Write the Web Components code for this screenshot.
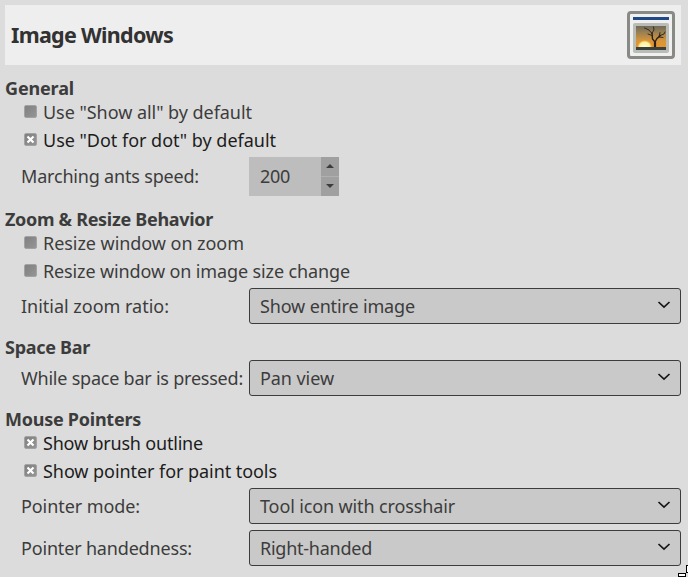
<!DOCTYPE html>
<html lang="en"><head><meta charset="utf-8"><title>Image Windows</title>
<style>
html,body{margin:0;height:100%;overflow:hidden;background:#dcdcdc}
body{font:18px/20px "Noto Sans",sans-serif;color:#3c3c3c}
</style></head><body>
<prefs-page></prefs-page>
<script>
const define=(name,html,setup)=>customElements.define(name,class extends HTMLElement{
  connectedCallback(){
    if(this.shadowRoot)return;
    this.attachShadow({mode:'open'}).innerHTML=html;
    if(setup)setup(this,this.shadowRoot);
  }
});

// Text whose tracking is adjusted so that it spans the width given in "w".
define('fit-text',`<style>:host{display:inline-block;white-space:pre}span{display:inline-block}</style><span></span>`,(el,root)=>{
  const s=root.querySelector('span');
  s.textContent=el.getAttribute('text');
  const w=+el.getAttribute('w')-1;
  if(w>0)s.style.letterSpacing=((w-s.getBoundingClientRect().width)/s.textContent.length)+'px';
});

define('image-icon',`<style>:host{display:block;width:48px;height:48px}svg{display:block}</style>
<svg width="48" height="48" viewBox="0 0 48 48">
<defs><linearGradient id="g" x1="0" y1="0" x2="0" y2="1"><stop offset="0" stop-color="#6f6a5c"/><stop offset=".35" stop-color="#a18350"/><stop offset=".7" stop-color="#d8953a"/><stop offset="1" stop-color="#e8962a"/></linearGradient>
<radialGradient id="s"><stop offset="0" stop-color="#fffbd0"/><stop offset=".7" stop-color="#fff0a0"/><stop offset="1" stop-color="#ffcf60" stop-opacity="0"/></radialGradient>
<clipPath id="c"><rect x="9" y="15" width="30" height="21"/></clipPath></defs>
<rect x="1.500" y="1.500" width="45" height="45" rx="2.500" fill="#f0f0f0" stroke="#888a85" stroke-width="3"/>
<rect x="6" y="6" width="36" height="3" fill="#204a87"/>
<rect x="6" y="12" width="36" height="30" rx="2" fill="#babdb6"/>
<rect x="9" y="15" width="30" height="24" fill="#3a4040"/>
<rect x="9" y="15" width="30" height="21" fill="url(#g)"/>
<ellipse cx="17.700" cy="36" rx="7.500" ry="7" fill="url(#s)" clip-path="url(#c)"/>
<g clip-path="url(#c)" fill="none" stroke="#2a211b" stroke-linecap="round"><path d="M28 37v-6" stroke-width="2.200"/><path d="M28 31l-2.500-3-.5-6" stroke-width="1.400"/><path d="M25 22.500l-3-3.500-4.500-2M25 22l2-3-.5-3M25 24.500l-4-1.500" stroke-width=".9"/><path d="M28 31l2-3.500 3.500-3" stroke-width="1.400"/><path d="M32 25.500l1-4M33 24.500l4-1.500 1-2M32 26l4 .5" stroke-width=".9"/></g>
</svg>`);

define('page-header',`<style>:host{display:flex;align-items:center;justify-content:space-between;box-sizing:border-box;height:60px;padding:0 6px;background:#eee;font-size:21.500px;font-weight:700;color:#323232}</style><slot></slot><image-icon></image-icon>`);

define('pref-section',`<style>:host{display:block;margin-top:13px}h2{margin:0 0 3px;height:20px;font:inherit;font-weight:700;line-height:20px}h2.tight{margin:0}</style><h2><slot name="title"></slot></h2><slot></slot>`,(el,root)=>{
  if(el.hasAttribute('tight'))root.querySelector('h2').className='tight';
});

define('check-row',`<style>:host{display:flex;align-items:center;height:28px;padding-left:19px;gap:6px}:host([checked]){color:#1c1c1c}
.b{box-sizing:border-box;width:13px;height:13px;margin-top:-1px;border:1px solid #a2a2a2;border-radius:2px;background:linear-gradient(135deg,#808080,#959595)}
svg{display:none}:host([checked]) svg{display:block}</style>
<div class="b"><svg width="11" height="11"><path d="M2.500 2.500l6 6M8.500 2.500l-6 6" stroke="#fff" stroke-width="2.200"/></svg></div><slot></slot>`);

define('field-row',`<style>:host{display:grid;grid-template-columns:228px 1fr;align-items:center;padding-left:16px}:host([after-checks]){margin-top:3px}:host([next]){margin-top:6px}:host([tall]) slot[name]{display:block;padding-bottom:1px}</style><slot name="label"></slot><slot></slot>`);

define('combo-box',`<style>:host{display:flex;align-items:center;justify-content:space-between;box-sizing:border-box;height:36px;border:1px solid #3c3c3c;border-radius:3px;background:#c9c9c9;padding:0 9px 0 10px}svg{display:block;margin-top:-3px}</style><slot></slot>
<svg width="14" height="8"><path d="M1.500 1l5.500 5.200L12.500 1" fill="none" stroke="#161616" stroke-width="1.700"/></svg>`);

define('spin-box',`<style>:host{display:grid;grid-template-columns:1fr 18px;width:90px;height:39px;background:#bdbdbd}.v{display:flex;align-items:center;padding:0 0 1px 11px}.s{display:grid;grid-template-rows:19px 19px;gap:1px;background:#b0b0b0}.s div{background:#a0a0a0;display:grid;place-items:center;padding-bottom:1px}svg{display:block}</style>
<div class="v"><slot></slot></div><div class="s"><div><svg width="8" height="4"><path d="M0 4l4-4 4 4z" fill="#3c3c3c"/></svg></div><div><svg width="8" height="4"><path d="M0 0h8L4 4z" fill="#3c3c3c"/></svg></div></div>`);

// Corner of the mouse pointer that rests at the window's lower right edge.
define('pointer-mark',`<style>:host{position:absolute;left:678px;top:564px;width:10px;height:13px}svg{display:block}</style>
<svg width="10" height="13" shape-rendering="crispEdges"><rect x="0" y="9" width="8" height="4" fill="#000"/><rect x="1" y="10" width="6" height="2" fill="#fff"/><rect x="8" y="1" width="2" height="8" fill="#000"/><rect x="9" y="2" width="1" height="6" fill="#fff"/></svg>`);

define('prefs-page',`<style>:host{display:block;padding:5px 7px 0 5px}</style>
<page-header><fit-text text="Image Windows" w="163"></fit-text></page-header>
<pref-section tight><fit-text slot="title" text="General" w="70"></fit-text>
<check-row><fit-text text='Use "Show all" by default' w="210"></fit-text></check-row>
<check-row checked><fit-text text='Use "Dot for dot" by default' w="234"></fit-text></check-row>
<field-row after-checks tall><fit-text slot="label" text="Marching ants speed:" w="179"></fit-text><spin-box><fit-text text="200" w="31"></fit-text></spin-box></field-row>
</pref-section>
<pref-section tight><fit-text slot="title" text="Zoom &amp; Resize Behavior" w="209"></fit-text>
<check-row><fit-text text="Resize window on zoom" w="202"></fit-text></check-row>
<check-row><fit-text text="Resize window on image size change" w="308"></fit-text></check-row>
<field-row after-checks><fit-text slot="label" text="Initial zoom ratio:" w="149"></fit-text><combo-box><fit-text text="Show entire image" w="156"></fit-text></combo-box></field-row>
</pref-section>
<pref-section><fit-text slot="title" text="Space Bar" w="86"></fit-text>
<field-row><fit-text slot="label" text="While space bar is pressed:" w="223"></fit-text><combo-box><fit-text text="Pan view" w="75"></fit-text></combo-box></field-row>
</pref-section>
<pref-section tight><fit-text slot="title" text="Mouse Pointers" w="137"></fit-text>
<check-row checked><fit-text text="Show brush outline" w="161"></fit-text></check-row>
<check-row checked><fit-text text="Show pointer for paint tools" w="235"></fit-text></check-row>
<field-row after-checks><fit-text slot="label" text="Pointer mode:" w="120"></fit-text><combo-box><fit-text text="Tool icon with crosshair" w="196"></fit-text></combo-box></field-row>
<field-row next><fit-text slot="label" text="Pointer handedness:" w="172"></fit-text><combo-box><fit-text text="Right-handed" w="113"></fit-text></combo-box></field-row>
</pref-section>
<pointer-mark></pointer-mark>`);
</script></body></html>
